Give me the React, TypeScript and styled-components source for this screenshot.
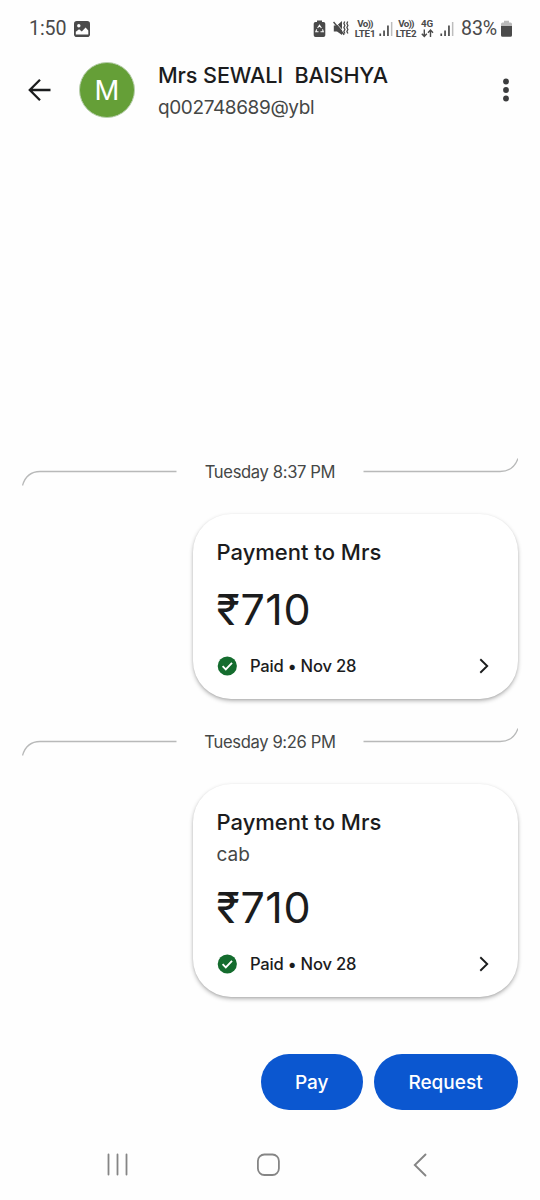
import React from 'react';
import styled, { createGlobalStyle } from 'styled-components';

const GlobalStyle = createGlobalStyle`
  *, *::before, *::after { box-sizing: border-box; }
  body { margin: 0; background: #fefefe; }
  svg { display: block; flex: none; }
`;

const Screen = styled.div`
  display: flex;
  flex-direction: column;
  width: 540px;
  height: 1200px;
  overflow: hidden;
  background: #fefefe;
  color: #1b1c1d;
  font-family: Inter, 'Noto Sans', sans-serif;
`;

const StatusBar = styled.div`
  display: flex;
  align-items: center;
  justify-content: space-between;
  height: 56px;
  padding: 1px 28px 0 29px;
  color: #4a4a4a;
  font-family: Roboto, sans-serif;
`;

const StatusGroup = styled.div`
  display: flex;
  align-items: center;
`;

const StatusItem = styled.div<{ $before: number }>`
  margin-left: ${(p) => p.$before}px;
`;

const StatusText = styled.div<{ $width: number }>`
  width: ${(p) => p.$width}px;
  padding-top: 1px;
  font-size: 19.6px;
  line-height: 24px;
  letter-spacing: -0.1px;
  white-space: nowrap;
`;

const NetworkLabel = styled.div<{ $width: number }>`
  display: flex;
  flex-direction: column;
  align-items: center;
  width: ${(p) => p.$width}px;
  font-size: 9.8px;
  font-weight: 700;
  line-height: 9.5px;
  letter-spacing: -0.2px;
  white-space: nowrap;
`;

const Waves = styled.span`
  letter-spacing: -0.8px;
`;

const Header = styled.header`
  display: flex;
  align-items: center;
  height: 67px;
  padding: 0 31px 0 28px;
`;

const Avatar = styled.div`
  display: flex;
  align-items: center;
  justify-content: center;
  width: 56px;
  height: 56px;
  margin: 0 23px 0 27px;
  padding-top: 1px;
  border: 1px solid #b9cfae;
  border-radius: 50%;
  background: #659f37;
  color: #fff;
  font-size: 27.5px;
`;

const Contact = styled.div`
  flex: 1;
  padding-top: 3px;
`;

const ContactName = styled.div`
  font-size: 21.6px;
  font-weight: 500;
  line-height: 32px;
  letter-spacing: -0.1px;
  white-space: pre;
`;

const ContactId = styled.div`
  color: #454746;
  font-size: 19px;
  line-height: 33px;
  letter-spacing: -0.38px;
`;

const Conversation = styled.main`
  display: flex;
  flex: 1;
  flex-direction: column;
  justify-content: flex-end;
  padding: 0 22px;
`;

const DateRow = styled.div`
  display: flex;
  align-items: center;
  justify-content: space-between;
  height: 30px;
  margin-bottom: 27px;
`;

const DateText = styled.span`
  color: #454746;
  font-size: 16.6px;
  line-height: 30px;
  letter-spacing: -0.36px;
  white-space: nowrap;
`;

const Card = styled.section<{ $last?: boolean }>`
  align-self: flex-end;
  width: 325px;
  margin-bottom: ${(p) => (p.$last ? 57 : 28)}px;
  padding: 22px 24px 21px 23.5px;
  border-radius: 38px;
  background: #fff;
  box-shadow: 0 2px 4px rgba(0, 0, 0, 0.28), 0 1px 2px rgba(0, 0, 0, 0.08);
`;

const CardTitle = styled.div`
  font-size: 22px;
  font-weight: 500;
  line-height: 32px;
`;

const CardNote = styled.div`
  height: 28px;
  color: #454746;
  font-size: 19px;
  line-height: 34px;
`;

const Amount = styled.div`
  margin: 14px 0 18px;
  font-size: 43px;
  line-height: 54px;
  letter-spacing: 0.6px;
`;

const PaidRow = styled.div`
  display: flex;
  align-items: center;
  height: 24px;
`;

const PaidText = styled.span`
  flex: 1;
  padding-left: 12.5px;
  font-size: 16.6px;
  font-weight: 500;
  line-height: 24px;
  letter-spacing: -0.22px;
`;

const Actions = styled.div`
  display: flex;
  justify-content: flex-end;
  gap: 11px;
  height: 56px;
  padding: 0 22.5px 0 22px;
`;

const ActionButton = styled.button<{ $width: number }>`
  width: ${(p) => p.$width}px;
  height: 56px;
  padding: 1px 0 0;
  border: 0;
  border-radius: 28px;
  background: #0b57d0;
  color: #fff;
  font: 500 19px/56px Inter, sans-serif;
`;

const NavBar = styled.nav`
  display: grid;
  grid-template-columns: 150px 157px 14px;
  align-items: center;
  height: 90px;
  padding: 20px 0 0 106px;
`;

const RecycleBattery = () => (
  <svg width="13" height="18" viewBox="0 0 13 18">
    <path d="M4 .5h5V2h1.500A1.800 1.800 0 0 1 12.300 3.800v11.400a1.800 1.800 0 0 1-1.800 1.800h-8A1.800 1.800 0 0 1 .7 15.200V3.800A1.800 1.800 0 0 1 2.500 2H4z" fill="#4a4a4a" />
    <path d="m4.600 8 1.900-2.700L8.400 8M9.500 9.400l.8 2.400H7.500M5.500 11.800H2.800l.9-2.400" fill="none" stroke="#fff" strokeWidth="1.100" />
  </svg>
);

const MuteVibrate = () => (
  <svg width="16" height="17" viewBox="0 0 16 17">
    <path d="M.8 5.500H4l5-4.500v14L4 11.500H.8z" fill="#4a4a4a" />
    <path d="M2.800 2.500 10.500 11.700" stroke="#fefefe" strokeWidth=".8" />
    <path d="m.5 2 10.700 12.800" stroke="#4a4a4a" strokeWidth="1.500" />
    <path d="m11.700 1.500-.8 2 1 2-1 2 1 2-1 2 1 2M14.700 1.500l-.8 2 1 2-1 2 1 2-1 2 1 2" fill="none" stroke="#4a4a4a" strokeWidth="1.300" />
  </svg>
);

const Signal = () => (
  <svg width="14" height="16" viewBox="0 0 14 16">
    <path d="M.4 12.500h1.700V15H.4zM4.200 9.500h1.700V15H4.200zM8.100 4.500h1.700V15H8.100z" fill="#4a4a4a" />
    <path d="M11.900 1h1.500v14h-1.500z" fill="#bdbdbd" />
  </svg>
);

const DataArrows = () => (
  <svg width="13" height="9" viewBox="0 0 13 9">
    <path d="M3.300.5v7M.8 4.800l2.500 2.600 2.500-2.600M9.500 8V1M7 3.700l2.500-2.600L12 3.700" fill="none" stroke="#4a4a4a" strokeWidth="1.400" />
  </svg>
);

const Battery = () => (
  <svg width="11" height="18" viewBox="0 0 11 18">
    <path d="M3 .8h5v1.700h1.500A1.500 1.500 0 0 1 11 4v3H0V4a1.500 1.500 0 0 1 1.500-1.500H3z" fill="#b9b9b9" />
    <path d="M0 6h11v9.200a1.600 1.600 0 0 1-1.600 1.600H1.600A1.600 1.600 0 0 1 0 15.200z" fill="#4a4a4a" />
  </svg>
);

const Gallery = () => (
  <svg width="16" height="16" viewBox="0 0 16 16">
    <rect width="16" height="16" rx="2.800" fill="#4a4a4a" />
    <circle cx="4.800" cy="4.800" r="1.700" fill="#fefefe" />
    <path d="M1.800 13.600v-2.800l3.300-2.500 2.700 2.100 3.800-3.800 2.700 2.800v4.200z" fill="#fefefe" />
  </svg>
);

const LeftRule = () => (
  <svg width="155" height="30" viewBox="0 0 155 30">
    <path d="M.5 28.500C3 20 9 14.500 18 14.500h136.500" fill="none" stroke="#b8b9b9" strokeWidth="1.300" />
  </svg>
);

const RightRule = () => (
  <svg width="155" height="30" viewBox="0 0 155 30">
    <path d="M.5 14.500H137c9 0 15-4.500 18-13" fill="none" stroke="#b8b9b9" strokeWidth="1.300" />
  </svg>
);

const PaymentCard = ({ note, last }: { note?: string; last?: boolean }) => (
  <Card $last={last}>
    <CardTitle>Payment to Mrs</CardTitle>
    {note && <CardNote>{note}</CardNote>}
    <Amount>₹710</Amount>
    <PaidRow>
      <svg width="21" height="20" viewBox="0 0 21 20">
        <circle cx="10.300" cy="10" r="9.600" fill="#146c2e" />
        <path d="m5.600 10.200 3.200 3.200 6.200-6.500" fill="none" stroke="#fff" strokeWidth="1.900" />
      </svg>
      <PaidText>Paid • Nov 28</PaidText>
      <svg width="15" height="18" viewBox="0 0 15 18">
        <path d="m1.300 2.300 6.900 6.700-6.900 6.700" fill="none" stroke="#1b1c1d" strokeWidth="1.900" />
      </svg>
    </PaidRow>
  </Card>
);

const DateDivider = ({ label }: { label: string }) => (
  <DateRow>
    <LeftRule />
    <DateText>{label}</DateText>
    <RightRule />
  </DateRow>
);

export default function App() {
  return (
    <Screen>
      <GlobalStyle />
      <StatusBar>
        <StatusGroup>
          <StatusText $width={37}>1:50</StatusText>
          <StatusItem $before={8}>
            <Gallery />
          </StatusItem>
        </StatusGroup>
        <StatusGroup>
          <RecycleBattery />
          <StatusItem $before={7}>
            <MuteVibrate />
          </StatusItem>
          <StatusItem $before={6}>
            <NetworkLabel $width={20}>
              <Waves>Vo))</Waves>
              <span>LTE1</span>
            </NetworkLabel>
          </StatusItem>
          <StatusItem $before={4}>
            <Signal />
          </StatusItem>
          <StatusItem $before={3}>
            <NetworkLabel $width={20}>
              <Waves>Vo))</Waves>
              <span>LTE2</span>
            </NetworkLabel>
          </StatusItem>
          <StatusItem $before={4}>
            <NetworkLabel $width={14}>
              <span>4G</span>
              <DataArrows />
            </NetworkLabel>
          </StatusItem>
          <StatusItem $before={6}>
            <Signal />
          </StatusItem>
          <StatusItem $before={7}>
            <StatusText $width={36}>83%</StatusText>
          </StatusItem>
          <StatusItem $before={4}>
            <Battery />
          </StatusItem>
        </StatusGroup>
      </StatusBar>
      <Header>
        <svg width="24" height="24" viewBox="0 0 24 24">
          <path d="M22.500 12H2M12 1.800 1.800 12 12 22.200" fill="none" stroke="#1b1c1d" strokeWidth="2.300" />
        </svg>
        <Avatar>M</Avatar>
        <Contact>
          <ContactName>{'Mrs SEWALI  BAISHYA'}</ContactName>
          <ContactId>q002748689@ybl</ContactId>
        </Contact>
        <svg width="6" height="24" viewBox="0 0 6 24" fill="#3c3d3e">
          <circle cx="3" cy="3.500" r="2.900" />
          <circle cx="3" cy="12" r="2.900" />
          <circle cx="3" cy="20.500" r="2.900" />
        </svg>
      </Header>
      <Conversation>
        <DateDivider label="Tuesday 8:37 PM" />
        <PaymentCard />
        <DateDivider label="Tuesday 9:26 PM" />
        <PaymentCard note="cab" last />
      </Conversation>
      <Actions>
        <ActionButton $width={101.5}>Pay</ActionButton>
        <ActionButton $width={144}>Request</ActionButton>
      </Actions>
      <NavBar>
        <svg width="24" height="24" viewBox="0 0 24 24">
          <path d="M2.500 1.500v20M11.500 1.500v20M20.500 1.500v20" stroke="#858585" strokeWidth="1.800" strokeLinecap="round" />
        </svg>
        <svg width="24" height="24" viewBox="0 0 24 24">
          <rect x="1.900" y="1.500" width="21" height="20.500" rx="6.500" fill="none" stroke="#858585" strokeWidth="1.800" />
        </svg>
        <svg width="14" height="24" viewBox="0 0 14 24">
          <path d="M12.500 1.500 1.800 12l10.700 10.500" fill="none" stroke="#858585" strokeWidth="1.900" strokeLinecap="round" />
        </svg>
      </NavBar>
    </Screen>
  );
}
